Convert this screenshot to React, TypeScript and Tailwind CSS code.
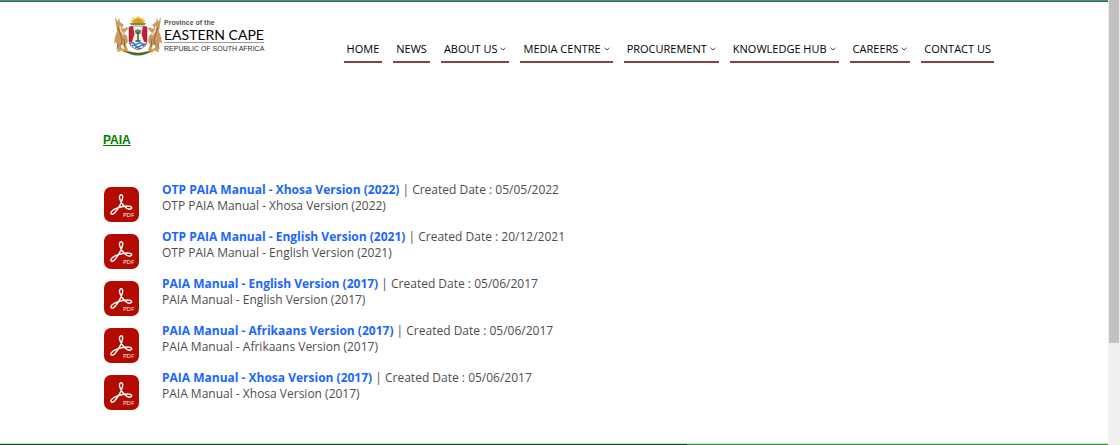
import React from 'react';

type NavEntry = { label: string; menu?: boolean };
type Doc = { title: string; date: string };

const NAV: NavEntry[] = [
  { label: 'HOME' },
  { label: 'NEWS' },
  { label: 'ABOUT US', menu: true },
  { label: 'MEDIA CENTRE', menu: true },
  { label: 'PROCUREMENT', menu: true },
  { label: 'KNOWLEDGE HUB', menu: true },
  { label: 'CAREERS', menu: true },
  { label: 'CONTACT US' },
];

const DOCS: Doc[] = [
  { title: 'OTP PAIA Manual - Xhosa Version (2022)', date: '05/05/2022' },
  { title: 'OTP PAIA Manual - English Version (2021)', date: '20/12/2021' },
  { title: 'PAIA Manual - English Version (2017)', date: '05/06/2017' },
  { title: 'PAIA Manual - Afrikaans Version (2017)', date: '05/06/2017' },
  { title: 'PAIA Manual - Xhosa Version (2017)', date: '05/06/2017' },
];

function Antelope() {
  return (
    <g>
      <path
        d="M2 1 L5 6 L6 1 L7 6 L11 9 L9 11 L10 13 L14 11 L15 13 L11 17 L14 20 L15 25 L13 29 L15 34 L12 35 L10 29 L8 29 L8 35 L4 36 L5 30 L3 26 L1 28 L2 21 L4 15 L3 9 Z"
        fill="#cb9a63"
      />
      <path d="M5 11 L7 17 L9 24 L8 29 M5 27 L4 33 M11 23 L12 31" stroke="#8d5f33" strokeWidth="0.9" fill="none" />
      <path d="M7 10 L8 15 L11 19" stroke="#f0ddc2" strokeWidth="1.4" fill="none" />
    </g>
  );
}

function Crest() {
  return (
    <svg viewBox="0 0 50 40" className="h-10 w-[50px] shrink-0" aria-hidden="true">
      <path d="M6 31 L16 35 Q25 38 34 35 L44 31 L40 36 L32 37 Q25 40 18 37 L10 36 Z" fill="#d6a93a" />
      <path d="M10 35 L18 36 Q25 38 32 36 L40 35 L33 38 Q25 41 17 38 Z" fill="#3f6b34" />
      <Antelope />
      <g transform="translate(50 0) scale(-1 1)">
        <Antelope />
      </g>
      <path d="M20 7 L17 5 L20 4 L19 1 L22 3 L25 0 L28 3 L31 1 L30 4 L33 5 L30 7 Z" fill="#efbd2c" />
      <path d="M20 7 A5 4.500 0 0 1 30 7 Z" fill="#dc9a1e" />
      <path d="M17 7 H33 L32 9 H18 Z" fill="#6c9440" />
      <path d="M16 11 L20 10 H30 L34 11 V25 Q34 31 25 34 Q16 31 16 25 Z" fill="#c0222f" />
      <path d="M20 10 H30 L28.500 18 L31 26 H19 L21.500 18 Z" fill="#f4f0ea" />
      <path d="M21.500 15 Q25 11.500 28.500 15 L27 18 H23 Z" fill="#63836a" />
      <path d="M25 16 V25 M22.500 25 H27.500" stroke="#28543a" strokeWidth="1.4" />
      <path d="M16.300 26 H33.700 Q32.500 31 25 34 Q17.500 31 16.300 26 Z" fill="#f5f7fa" />
      <path
        d="M17 27.500 Q19 26 21 27.500 T25 27.500 T29 27.500 T33 27.500 M19 30 Q21 28.500 23 30 T27 30 T31 30 M22 32 Q23.500 31 25 32 T28 32"
        stroke="#2f78c0"
        strokeWidth="1.3"
        fill="none"
      />
      <path d="M16 11 L20 10 H30 L34 11 V25 Q34 31 25 34 Q16 31 16 25 Z" fill="none" stroke="#6b2a2a" strokeWidth="0.5" />
    </svg>
  );
}

function Logo() {
  return (
    <a href="#home" aria-label="Province of the Eastern Cape home" className="flex items-start gap-px text-[#2b2b2b]">
      <Crest />
      <span className="flex flex-col pt-0.5 font-['Liberation_Sans',sans-serif]">
        <span className="text-[7px] font-bold leading-[10px] text-[#555]">Province of the</span>
        <span className="whitespace-nowrap border-b border-[#999] font-['Lato',sans-serif] text-[14px] leading-[14px] text-black">
          EASTERN CAPE
        </span>
        <span className="whitespace-nowrap pt-px text-[7px] leading-[10px]">REPUBLIC OF SOUTH AFRICA</span>
      </span>
    </a>
  );
}

function Chevron() {
  return (
    <svg viewBox="0 0 6 4" className="mt-px h-1 w-1.5" aria-hidden="true">
      <path d="M0.500 0.800 L3 3 L5.500 0.800" fill="none" stroke="#333" strokeWidth="0.9" />
    </svg>
  );
}

function PdfIcon() {
  return (
    <svg viewBox="0 0 35 35" className="size-[35px]" aria-hidden="true">
      <rect width="35" height="35" rx="7" fill="#b30b00" />
      <path
        d="M16 8.500 C17.500 6.500 19.500 8.500 18.500 11.500 C17.500 16.500 13.500 22.500 10.500 26 C8.500 28.200 6 27.200 7.200 25 C9 22 17 19 23.500 19 C28.500 19 28.700 22 25.800 22.200 C22 22.300 17 16.500 15.600 11.500 C15.300 10.300 15.400 9.300 16 8.500 Z"
        fill="none"
        stroke="#fff"
        strokeWidth="1.4"
        strokeLinejoin="round"
      />
      <text x="19" y="30" fontSize="6" fontFamily="Open Sans, sans-serif" fill="#fff">
        PDF
      </text>
    </svg>
  );
}

export default function App() {
  return (
    <div className="flex min-h-screen bg-white font-['Open_Sans',sans-serif]">
      <div className="flex min-w-0 flex-1 flex-col">
        <div className="h-0.5 border-b border-[#2d6a50] bg-[#4a9373]" />
        <header className="flex items-start pl-[113px] pt-3.5">
          <Logo />
          <nav aria-label="Main" className="ml-auto mr-[114px] mt-6 flex gap-[11px]">
            {NAV.map((item) => (
              <a
                key={item.label}
                href="#menu"
                className="flex items-center gap-[3px] whitespace-nowrap border-b-2 border-[#8b4141] px-[3px] pb-1 text-[11px] leading-[17px] text-black"
              >
                {item.label}
                {item.menu && <Chevron />}
              </a>
            ))}
          </nav>
        </header>
        <main className="flex-1 px-[103px] pt-[69px]">
          <h1 className="font-['Liberation_Sans',sans-serif] text-[12px] font-bold leading-4 text-[#008000] underline">PAIA</h1>
          <ul className="mt-[34px] flex flex-col gap-[7px] pl-px">
            {DOCS.map((doc) => (
              <li key={doc.title} className="flex gap-[23px]">
                <div className="shrink-0 pt-[5px]">
                  <PdfIcon />
                </div>
                <div className="text-[12px] leading-4 text-[#4d4d4d]">
                  <p>
                    <a href="#pdf" className="font-bold text-[#1a66ff]">
                      {doc.title}
                    </a>{' '}
                    | Created Date : {doc.date}
                  </p>
                  <p>{doc.title}</p>
                </div>
              </li>
            ))}
          </ul>
        </main>
        <footer className="flex h-0.5 border-t border-[#cfe0d2]">
          <div className="w-[62%] bg-[#0a4a2c]" />
          <div className="flex-1 bg-[#3f8a3f]" />
        </footer>
      </div>
      <div className="w-3 bg-[#f0f0f0] px-px" aria-hidden="true">
        <div className="h-[343px] bg-[#c1c1c1]" />
      </div>
    </div>
  );
}
